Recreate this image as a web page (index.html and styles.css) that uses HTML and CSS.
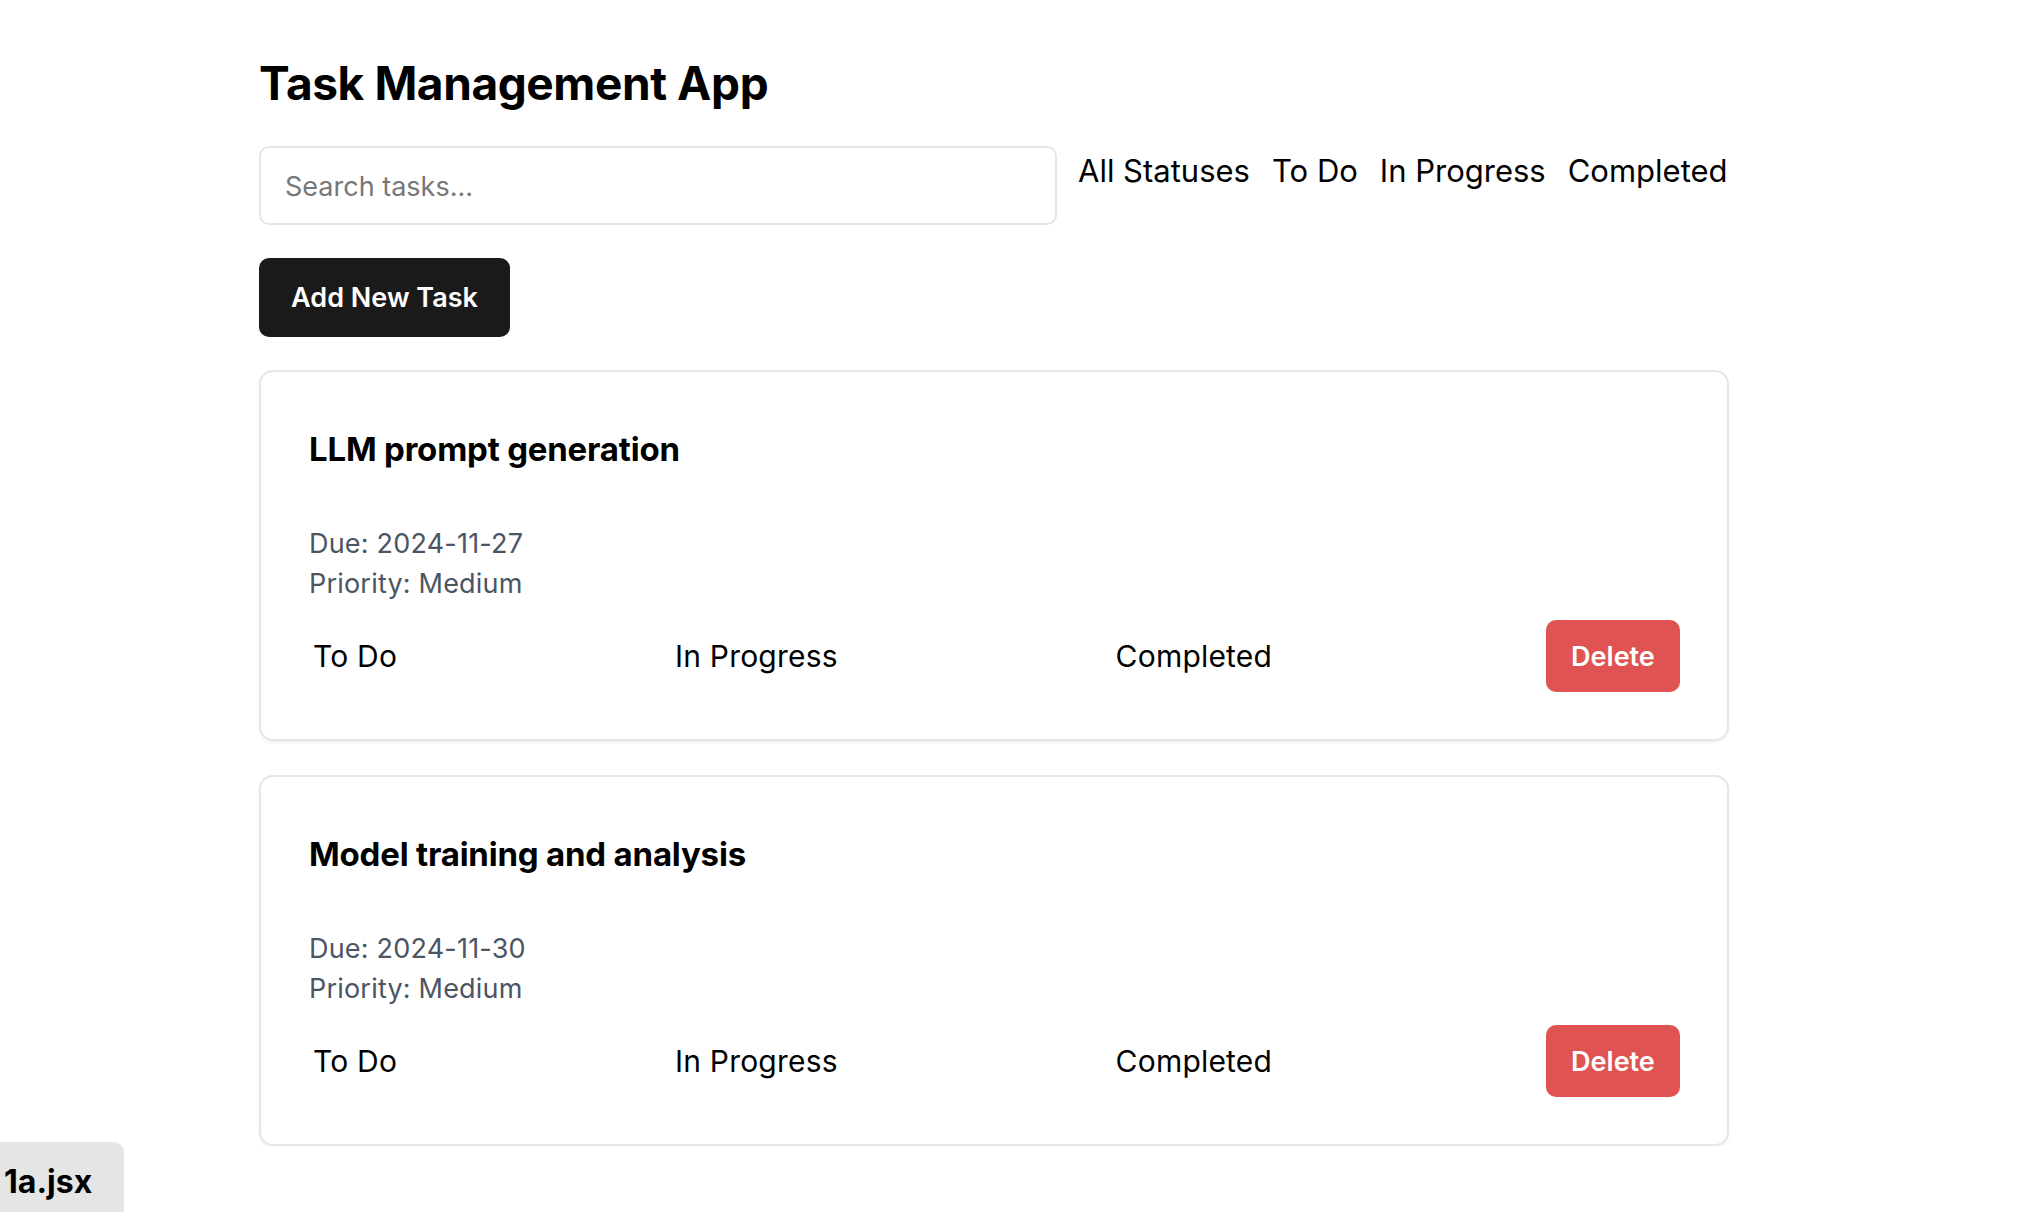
FILE: index.html
```html
<!DOCTYPE html>
<html lang="en">
<head>
<meta charset="utf-8">
<title>Task Management App</title>
<link rel="stylesheet" href="styles.css">
</head>
<body>
<div class="app">
  <h1 class="app-title">Task Management App</h1>
  <div class="toolbar">
    <input class="search" type="text" placeholder="Search tasks...">
    <div class="filters">
      <button class="filter">All Statuses</button>
      <button class="filter">To Do</button>
      <button class="filter">In Progress</button>
      <button class="filter">Completed</button>
    </div>
  </div>
  <button class="add-btn">Add New Task</button>
  <div class="task-list">
    <div class="task-card">
      <h2 class="task-title">LLM prompt generation</h2>
      <p class="task-meta">Due: 2024-11-27</p>
      <p class="task-meta">Priority: Medium</p>
      <div class="task-actions">
        <button class="status-btn">To Do</button>
        <button class="status-btn">In Progress</button>
        <button class="status-btn">Completed</button>
        <button class="delete-btn">Delete</button>
      </div>
    </div>
    <div class="task-card">
      <h2 class="task-title">Model training and analysis</h2>
      <p class="task-meta">Due: 2024-11-30</p>
      <p class="task-meta">Priority: Medium</p>
      <div class="task-actions">
        <button class="status-btn">To Do</button>
        <button class="status-btn">In Progress</button>
        <button class="status-btn">Completed</button>
        <button class="delete-btn">Delete</button>
      </div>
    </div>
  </div>
</div>
<div class="file-badge">1a.jsx</div>
</body>
</html>
```
FILE: styles.css
```css
* { box-sizing: border-box; }
body {
  margin: 0;
  font-family: Inter, "Noto Sans", sans-serif;
  color: #000;
  background: #fff;
}
.app {
  width: 1470px;
  margin-left: 259px;
  padding-top: 55px;
}
.app-title {
  margin: 0 0 35px;
  font-size: 46px;
  line-height: 56px;
  font-weight: 700;
  letter-spacing: -0.4px;
}
.toolbar {
  display: flex;
  align-items: flex-start;
  gap: 21px;
}
.search {
  flex: 0 0 798px;
  width: 798px;
  height: 79px;
  border: 2px solid #e5e5e5;
  border-radius: 10px;
  padding: 2px 24px 0;
  font-family: inherit;
  font-size: 27px;
  color: #111;
  outline: none;
}
.search::placeholder { color: #777; }
.filters {
  flex: 0 0 auto;
  display: flex;
  gap: 22px;
  margin-top: 7px;
  white-space: nowrap;
}
.filter {
  border: none;
  background: none;
  padding: 0;
  font-family: inherit;
  font-size: 31px;
  line-height: 36px;
  color: #000;
  white-space: nowrap;
}
.add-btn {
  display: block;
  margin-top: 33px;
  width: 251px;
  height: 79px;
  border: none;
  border-radius: 10px;
  background: #1a1a1a;
  color: #fff;
  font-family: inherit;
  font-size: 27px;
  font-weight: 600;
}
.task-list {
  display: flex;
  flex-direction: column;
  gap: 34px;
  margin-top: 33px;
}
.task-card {
  border: 2px solid #e6e6e6;
  border-radius: 14px;
  padding: 50px 47px 47px 48px;
  box-shadow: 0 2px 3px rgba(0,0,0,0.05);
}
.task-title {
  margin: 0 0 48px;
  font-size: 33px;
  line-height: 54px;
  font-weight: 700;
  letter-spacing: -0.2px;
}
.task-meta {
  margin: 0;
  font-size: 27px;
  line-height: 40px;
  color: #4b5563;
  letter-spacing: 0.2px;
}
.task-actions {
  margin-top: 16px;
  display: flex;
  justify-content: space-between;
  align-items: center;
}
.status-btn {
  border: none;
  background: none;
  padding: 0 4px;
  font-family: inherit;
  font-size: 30px;
  letter-spacing: 0.2px;
  color: #000;
}
.delete-btn {
  width: 134px;
  height: 72px;
  border: none;
  border-radius: 10px;
  background: #e05353;
  color: #fff;
  font-family: inherit;
  font-size: 27px;
  font-weight: 600;
}
.file-badge {
  position: fixed;
  left: 0;
  bottom: 0;
  width: 124px;
  height: 70px;
  padding: 20px 0 0 4px;
  background: #e5e5e5;
  border-top-right-radius: 10px;
  font-size: 32px;
  line-height: 40px;
  font-weight: 700;
}
```
